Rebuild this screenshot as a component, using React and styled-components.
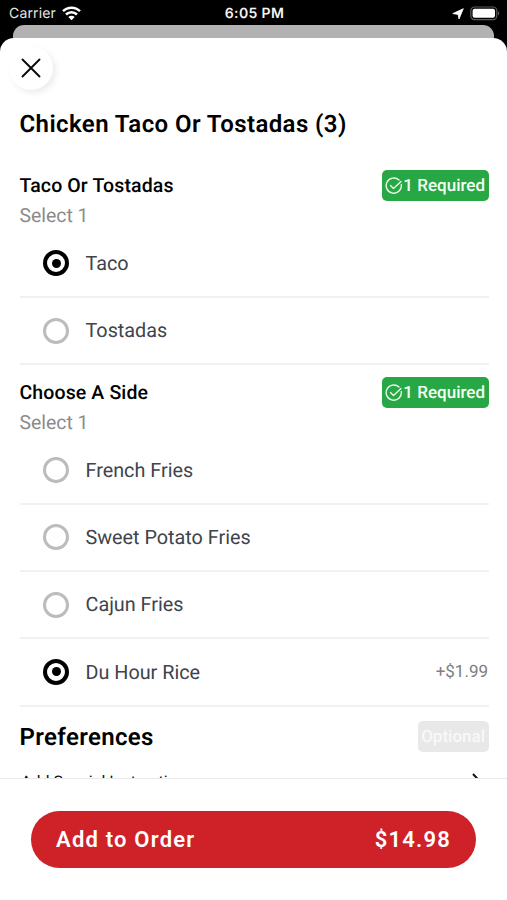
import React from "react";
import styled, { createGlobalStyle } from "styled-components";

const GlobalStyle = createGlobalStyle`
  * { box-sizing: border-box; }
  body {
    margin: 0;
    background: #000;
    font-family: Roboto, "Liberation Sans", sans-serif;
    text-rendering: geometricPrecision;
  }
`;

const Screen = styled.div`
  display: flex;
  flex-direction: column;
  width: 507px;
  height: 900px;
  overflow: hidden;
  background: #000;
`;

const StatusBar = styled.header`
  display: grid;
  grid-template-columns: 1fr auto 1fr;
  align-items: center;
  flex: none;
  height: 25px;
  padding: 2px 7px 0 9px;
  color: #e6e6e6;
  font: 400 14px/20px Inter, sans-serif;
`;

const StatusGroup = styled.div`
  display: flex;
  align-items: center;
  justify-content: ${(p) => (p.$end ? "flex-end" : "flex-start")};
  gap: 6px;
`;

const CarrierName = styled.span`
  letter-spacing: 0.15px;
`;

const Clock = styled.span`
  color: #f4f4f4;
  font-size: 14px;
  font-weight: 600;
  letter-spacing: 0.35px;
`;

const Backdrop = styled.div`
  flex: none;
  height: 13px;
  margin: 0 13px;
  border-radius: 11px 11px 0 0;
  background: #b2b2b2;
`;

const Sheet = styled.main`
  display: flex;
  flex-direction: column;
  flex: 1;
  min-height: 0;
  overflow: hidden;
  border-radius: 14px 14px 0 0;
  background: #fff;
`;

const CloseButton = styled.button`
  display: flex;
  align-items: center;
  justify-content: center;
  flex: none;
  width: 44px;
  height: 44px;
  margin: 8px 0 0 9px;
  padding: 0;
  border: 0;
  border-radius: 50%;
  background: #fff;
  box-shadow: 3px 3px 6px rgba(0, 0, 0, 0.08);
`;

const Content = styled.div`
  flex: 1;
  min-height: 0;
  overflow: hidden;
  padding: 0 18px 0 19.5px;
`;

const Title = styled.h1`
  margin: 18.6px 0 30.9px;
  font-size: 24px;
  font-weight: 600;
  line-height: 31px;
  letter-spacing: 0.42px;
  color: #000;
`;

const Section = styled.section`
  & + & { margin-top: 11.7px; }
`;

const SectionHeader = styled.div`
  display: flex;
  align-items: center;
  justify-content: space-between;
  height: 31px;
`;

const SectionTitle = styled.h2`
  margin: 0;
  font-size: ${(p) => (p.$large ? "24px" : "19.5px")};
  font-weight: ${(p) => (p.$large ? 600 : 500)};
  line-height: 30px;
  letter-spacing: ${(p) => (p.$large ? "0.35px" : "0.12px")};
  color: #000;
`;

const Badge = styled.span`
  display: flex;
  align-items: center;
  gap: 0.5px;
  height: 31px;
  padding: 0.5px 4px 0 3px;
  border-radius: 5px;
  background: ${(p) => (p.$muted ? "#e8e8e8" : "#28a745")};
  color: ${(p) => (p.$muted ? "#f8f8f8" : "#f4fff5")};
  font-size: 17px;
  font-weight: 500;
  white-space: nowrap;
`;

const Hint = styled.p`
  margin: 0;
  color: #8b8b8b;
  font-size: 19.4px;
  line-height: 30px;
  height: 29.3px;
`;

const Option = styled.label`
  display: flex;
  align-items: center;
  height: 67.3px;
  padding-left: 23.5px;
  border-bottom: 2px solid #f1f1f1;
  color: #40444c;
  font-size: 19.8px;
`;

const OptionName = styled.span`
  flex: 1;
  margin: 0.5px 0 0 17.5px;
`;

const Price = styled.span`
  margin-right: 1px;
  color: #808080;
  font-size: 17px;
`;

const Radio = styled.span`
  display: grid;
  place-items: center;
  width: 26px;
  height: 26px;
  margin-right: -1px;
  border: ${(p) => (p.$checked ? "4px solid #000" : "3.5px solid #bcbcbc")};
  border-radius: 50%;
  &::after {
    content: "";
    width: 9px;
    height: 9px;
    border-radius: 50%;
    background: ${(p) => (p.$checked ? "#000" : "transparent")};
  }
`;

const Preferences = styled.section`
  margin-top: 14.6px;
`;

const LinkRow = styled.div`
  display: flex;
  align-items: center;
  justify-content: space-between;
  height: 30px;
  margin-top: 14.6px;
  padding: 0 6px 0 1.5px;
  font-size: 16px;
  color: #111;
`;

const Footer = styled.footer`
  flex: none;
  height: 122px;
  padding: 32px 31px 0;
  border-top: 1.5px solid #e9e9e9;
  background: #fff;
`;

const OrderButton = styled.button`
  display: flex;
  align-items: center;
  justify-content: space-between;
  width: 445px;
  height: 57px;
  padding: 0 25px;
  border: 0;
  border-radius: 29px;
  background: #cf2128;
  color: #fff;
  font: 600 22px/28px Roboto, sans-serif;
  letter-spacing: 1.2px;
`;

const groups = [
  { title: "Taco Or Tostadas", options: [{ name: "Taco", checked: true }, { name: "Tostadas" }] },
  {
    title: "Choose A Side",
    options: [
      { name: "French Fries" },
      { name: "Sweet Potato Fries" },
      { name: "Cajun Fries" },
      { name: "Du Hour Rice", price: "+$1.99", checked: true },
    ],
  },
];

const WifiIcon = () => (
  <svg width="19" height="15" viewBox="0 0 19 15" fill="none" stroke="#fff" strokeWidth="2.5">
    <path d="M1 5.2a12.1 12.1 0 0 1 17 0M4 8.5a7.8 7.8 0 0 1 11 0" />
    <path d="M9.5 14.2 6.3 11a4.5 4.5 0 0 1 6.4 0Z" fill="#fff" stroke="none" />
  </svg>
);

const LocationIcon = () => (
  <svg width="12" height="12" viewBox="0 0 12 12">
    <path d="M11.3.7 7 11 6.1 6.4.8 5.6Z" fill="#fff" stroke="#fff" strokeWidth=".8" strokeLinejoin="round" />
  </svg>
);

const BatteryIcon = () => (
  <svg width="30" height="15" viewBox="0 0 30 15">
    <rect x=".8" y="1" width="26" height="12.6" rx="3.6" fill="none" stroke="#5c5c5c" strokeWidth="1.2" />
    <rect x="2.6" y="2.8" width="22.4" height="9" rx="2" fill="#fff" />
    <path d="M28 5.2c1.8.6 1.8 3.6 0 4.2Z" fill="#5c5c5c" />
  </svg>
);

const CloseIcon = () => (
  <svg width="20" height="20" viewBox="0 0 20 20" fill="none" stroke="#090909" strokeWidth="1.9" strokeLinecap="round">
    <path d="m1.5 1.5 17 17M18.5 1.5l-17 17" />
  </svg>
);

const CheckIcon = () => (
  <svg width="18" height="18" viewBox="0 0 18 18" fill="none" stroke="#e9fbe9" strokeWidth="1.4" strokeLinecap="round" strokeLinejoin="round">
    <path d="M14 3.1A7.6 7.6 0 1 0 16.3 7.5" />
    <path d="m5.5 8.4 3 3L16 4.5" />
  </svg>
);

const ChevronIcon = () => (
  <svg width="12" height="18" viewBox="0 0 12 18" fill="none" stroke="#111" strokeWidth="2">
    <path d="m2 1 7.5 8L2 17" />
  </svg>
);

export default function App() {
  return (
    <Screen>
      <GlobalStyle />
      <StatusBar>
        <StatusGroup>
          <CarrierName>Carrier</CarrierName>
          <WifiIcon />
        </StatusGroup>
        <Clock>6:05 PM</Clock>
        <StatusGroup $end>
          <LocationIcon />
          <BatteryIcon />
        </StatusGroup>
      </StatusBar>
      <Backdrop />
      <Sheet>
        <CloseButton aria-label="Close">
          <CloseIcon />
        </CloseButton>
        <Content>
          <Title>Chicken Taco Or Tostadas (3)</Title>
          {groups.map((group) => (
            <Section key={group.title}>
              <SectionHeader>
                <SectionTitle>{group.title}</SectionTitle>
                <Badge>
                  <CheckIcon />1 Required
                </Badge>
              </SectionHeader>
              <Hint>Select 1</Hint>
              {group.options.map((option) => (
                <Option key={option.name}>
                  <Radio $checked={option.checked} />
                  <OptionName>{option.name}</OptionName>
                  {option.price && <Price>{option.price}</Price>}
                </Option>
              ))}
            </Section>
          ))}
          <Preferences>
            <SectionHeader>
              <SectionTitle $large>Preferences</SectionTitle>
              <Badge $muted>Optional</Badge>
            </SectionHeader>
            <LinkRow>
              Add Special Instructions
              <ChevronIcon />
            </LinkRow>
          </Preferences>
        </Content>
        <Footer>
          <OrderButton>
            <span>Add to Order</span>
            <span>$14.98</span>
          </OrderButton>
        </Footer>
      </Sheet>
    </Screen>
  );
}
